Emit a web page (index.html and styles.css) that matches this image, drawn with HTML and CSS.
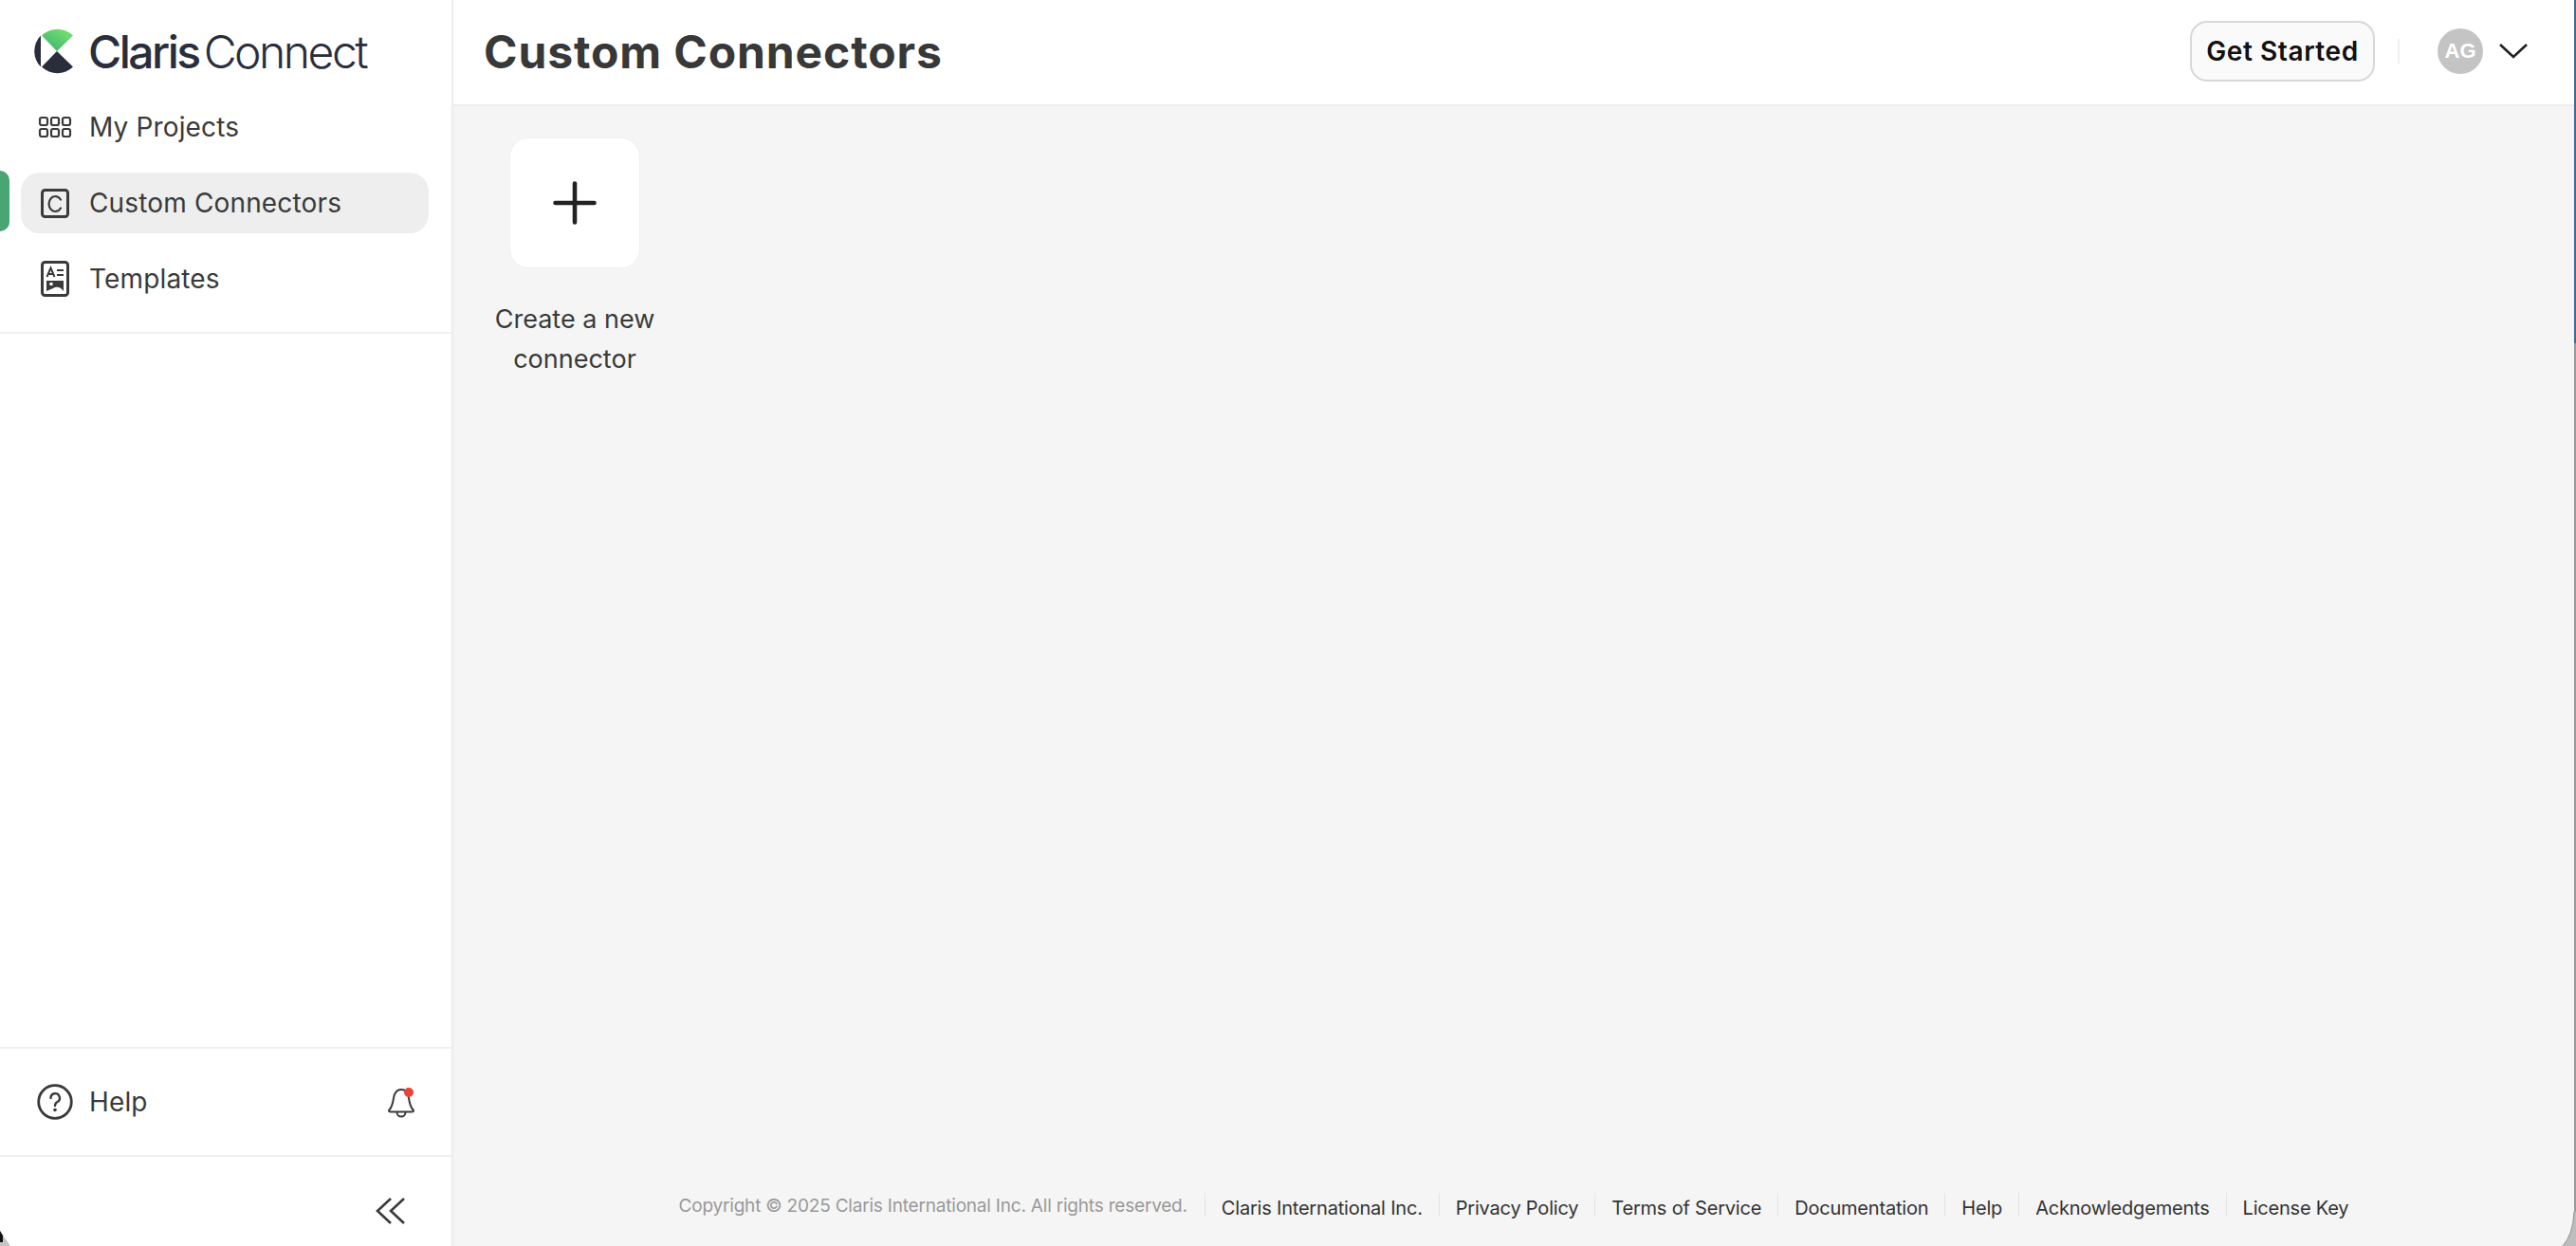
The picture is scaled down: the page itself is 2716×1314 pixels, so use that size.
FILE: index.html
```html
<!DOCTYPE html>
<html lang="en">
<head>
    <meta charset="UTF-8">
    <title>Custom Connectors</title>
    <link rel="stylesheet" href="styles.css">
</head>
<body>
<aside class="sidebar">
    <div class="brand">
        <svg class="brand-mark" width="48" height="48" viewBox="0 0 48 48">
            <defs>
                <linearGradient id="leaf" x1="0.1" y1="1" x2="0.9" y2="0">
                    <stop offset="0" stop-color="#37b36f"/>
                    <stop offset="1" stop-color="#7be26f"/>
                </linearGradient>
            </defs>
            <path d="M24 24 L8 7.500 A23.500 23.500 0 0 1 41 7.500 Z" fill="url(#leaf)"/>
            <path d="M24 24 L8 40.500 A23.500 23.500 0 0 0 41 40.500 Z" fill="#2a2e3c"/>
            <path d="M7 7.500 A23.500 23.500 0 0 0 7 40.500 Z" fill="#2a2e3c"/>
        </svg>
        <span class="brand-name"><b>Claris</b> Connect</span>
    </div>
    <nav class="nav">
        <a class="nav-item">
            <svg class="icon" width="36" height="36" viewBox="0 0 36 36" fill="none" stroke="#3a3a3a" stroke-width="2.2">
                <rect x="2" y="8" width="8" height="8" rx="2"/><rect x="14" y="8" width="8" height="8" rx="2"/><rect x="26" y="8" width="8" height="8" rx="2"/>
                <rect x="2" y="20" width="8" height="8" rx="2"/><rect x="14" y="20" width="8" height="8" rx="2"/><rect x="26" y="20" width="8" height="8" rx="2"/>
            </svg>
            My Projects
        </a>
        <a class="nav-item active">
            <svg class="icon" width="36" height="36" viewBox="0 0 36 36" fill="none" stroke="#3a3a3a" stroke-width="3">
                <rect x="4.500" y="4.500" width="27" height="28" rx="3"/>
                <path d="M24 14.500 A6.800 8 0 1 0 24 23.500" stroke-width="2.200" stroke-linecap="round"/>
            </svg>
            Custom Connectors
        </a>
        <a class="nav-item">
            <svg class="icon" width="36" height="40" viewBox="0 0 36 40" fill="none" stroke="#3a3a3a" stroke-width="3">
                <rect x="4.500" y="2.500" width="27" height="35" rx="3"/>
                <path d="M9.500 18 L13.500 8.500 L17.500 18 M11 15 H16 M20 11 H27 M20 16 H27" stroke-width="2"/>
                <path d="M9 22 H27 V33 C24 29 20 27.500 16 30 C14 31 11 32 9 33 Z" fill="#3a3a3a" stroke="none"/>
                <circle cx="14" cy="25.500" r="1.800" fill="#fff" stroke="none"/>
            </svg>
            Templates
        </a>
    </nav>
    <div class="side-spacer"></div>
    <div class="side-help">
        <a class="help-link">
            <svg class="icon" width="38" height="38" viewBox="0 0 38 38" fill="none" stroke="#3a3a3a" stroke-width="2.800">
                <circle cx="19" cy="19" r="17.300"/>
                <path d="M14.500 15 A4.700 4.700 0 1 1 21.500 19 C19.800 20 19 21 19 23" stroke-linecap="round" stroke-width="2.400"/>
                <circle cx="19" cy="27.500" r="1.800" fill="#3a3a3a" stroke="none"/>
            </svg>
            Help
        </a>
        <svg class="bell" width="30" height="34" viewBox="0 0 30 34" fill="none" stroke="#3a3a3a" stroke-width="2">
            <path d="M2 26 C6 22 6 18 7 13 C8 7 11 4 15 4 C19 4 22 7 23 13 C24 18 24 22 28 26 C28 27 27 27.500 26 27.500 H4 C3 27.500 2 27 2 26 Z" stroke-linejoin="round"/>
            <path d="M10.500 28 A4.500 4.500 0 0 0 19.500 28"/>
            <circle cx="23" cy="7" r="5" fill="#ea4335" stroke="none"/>
        </svg>
    </div>
    <div class="side-collapse">
        <svg width="32" height="30" viewBox="0 0 32 30" fill="none" stroke="#3a3a3a" stroke-width="2.600">
            <path d="M16 2 L2 15 L16 28"/>
            <path d="M30 2 L16 15 L30 28"/>
        </svg>
    </div>
</aside>

<main class="main">
    <header class="topbar">
        <h1>Custom Connectors</h1>
        <div class="topbar-actions">
            <button class="btn-start">Get Started</button>
            <span class="topbar-sep"></span>
            <span class="avatar">AG</span>
            <svg width="32" height="18" viewBox="0 0 32 18" fill="none" stroke="#222" stroke-width="2.600">
                <path d="M2 2 L16 15 L30 2"/>
            </svg>
        </div>
    </header>
    <section class="content">
        <a class="new-connector">
            <span class="new-card">
                <svg width="46" height="46" viewBox="0 0 46 46" stroke="#222" stroke-width="4.600" stroke-linecap="round">
                    <path d="M23 2.500 V43.500 M2.500 23 H43.500"/>
                </svg>
            </span>
            <span class="new-label">Create a new connector</span>
        </a>
    </section>
    <footer class="footer">
        <span class="copyright">Copyright © 2025 Claris International Inc. All rights reserved.</span>
        <a>Claris International Inc.</a>
        <a>Privacy Policy</a>
        <a>Terms of Service</a>
        <a>Documentation</a>
        <a>Help</a>
        <a>Acknowledgements</a>
        <a>License Key</a>
    </footer>
</main>
<div class="edge"></div>

<svg class="corner corner-left" width="12" height="16" viewBox="0 0 12 16">
    <path d="M0 0 L11 16 H0 Z" fill="#c4c4c4"/>
    <path d="M0 0 L3 5 V12 H0 Z" fill="#111"/>
</svg>
<svg class="corner corner-right" width="16" height="36" viewBox="0 0 16 36">
    <path d="M14 0 Q13 24 2 36 H16 V0 Z" fill="#bdbdbd"/>
    <path d="M14 0 Q13 24 2 36" fill="none" stroke="#8f8f8f" stroke-width="1"/>
</svg>
</body>
</html>
```

FILE: styles.css
```css
* {
    margin: 0;
    padding: 0;
    box-sizing: border-box;
}
html, body {
    height: 100%;
}
body {
    display: flex;
    position: relative;
    overflow: hidden;
    font-family: Inter, "Liberation Sans", sans-serif;
    color: #3a3a3a;
    background: #fff;
}

/* sidebar */
.sidebar {
    width: 478px;
    flex: none;
    display: flex;
    flex-direction: column;
    border-right: 2px solid #ececec;
}
.brand {
    height: 102px;
    display: flex;
    align-items: center;
    padding: 6px 0 0 36px;
    gap: 9px;
}
.brand-mark {
    flex: none;
}
.brand-name {
    font-size: 48px;
    font-weight: 300;
    letter-spacing: -2.5px;
    color: #2a2e3c;
    word-spacing: -6px;
}
.brand-name b {
    font-weight: 500;
}
.nav {
    display: flex;
    flex-direction: column;
    gap: 16px;
    padding-bottom: 24px;
    border-bottom: 2px solid #f0f0f0;
}
.nav-item {
    position: relative;
    height: 64px;
    margin-left: 22px;
    width: 430px;
    padding-left: 18px;
    display: flex;
    align-items: center;
    gap: 18px;
    font-size: 28px;
    letter-spacing: 0.15px;
    border-radius: 20px;
}
.nav-item.active {
    background: #eeeeee;
}
.nav-item.active::before {
    content: "";
    position: absolute;
    left: -22px;
    top: -2px;
    width: 10px;
    height: 64px;
    background: #4aa574;
    border-radius: 0 10px 10px 0;
}
.icon {
    flex: none;
}
.side-spacer {
    flex: 1;
}
.side-help {
    height: 116px;
    display: flex;
    align-items: center;
    justify-content: space-between;
    padding: 0 38px 0 39px;
    border-top: 2px solid #f0f0f0;
    border-bottom: 2px solid #f0f0f0;
}
.help-link {
    display: flex;
    align-items: center;
    gap: 17px;
    font-size: 28px;
    letter-spacing: 0.15px;
}
.side-collapse {
    height: 94px;
    display: flex;
    justify-content: flex-end;
    align-items: center;
    padding: 20px 48px 0 0;
}

/* main */
.main {
    flex: 1;
    min-width: 0;
    display: flex;
    flex-direction: column;
    background: #f5f5f5;
}
.topbar {
    height: 112px;
    flex: none;
    display: flex;
    align-items: center;
    justify-content: space-between;
    padding: 0 48px 2px 32px;
    background: #fff;
    border-bottom: 2px solid #ececec;
}
h1 {
    font-size: 48px;
    font-weight: 700;
    letter-spacing: 0.9px;
    color: #383838;
}
.topbar-actions {
    display: flex;
    align-items: center;
}
.btn-start {
    width: 195px;
    height: 64px;
    font: 600 28px Inter, "Liberation Sans", sans-serif;
    letter-spacing: 0.6px;
    color: #111;
    background: #fafafa;
    border: 2px solid #d8d8d8;
    border-radius: 18px;
}
.topbar-sep {
    width: 2px;
    height: 26px;
    margin: 0 40px 0 24px;
    background: #efefef;
}
.avatar {
    width: 48px;
    height: 48px;
    margin-right: 16px;
    border-radius: 50%;
    background: #c4c4c4;
    color: #fff;
    font: 700 22px/48px "Liberation Sans", sans-serif;
    text-align: center;
}
.content {
    flex: 1;
    padding: 33px 0 0 30px;
}
.new-connector {
    width: 196px;
    display: flex;
    flex-direction: column;
    align-items: center;
}
.new-card {
    width: 138px;
    height: 138px;
    display: flex;
    align-items: center;
    justify-content: center;
    background: #fff;
    border: 1px solid #efefef;
    border-radius: 20px;
}
.new-label {
    margin-top: 33px;
    font-size: 27px;
    line-height: 42px;
    text-align: center;
}
.footer {
    display: flex;
    justify-content: center;
    align-items: flex-start;
    padding: 0 0 31px 17px;
    font-size: 20px;
    letter-spacing: -0.2px;
}
.footer a {
    height: 25px;
    line-height: 33px;
    padding: 0 17px;
    border-left: 1px solid #e4e4e4;
    color: #333;
}
.copyright {
    height: 25px;
    line-height: 27px;
    padding-right: 18px;
    font-size: 19px;
    letter-spacing: -0.2px;
    color: #999;
}

/* the strip of desktop behind the window */
.edge {
    width: 2px;
    flex: none;
    background: linear-gradient(#3f6a94 362px, #9a9a9a 362px);
}
.corner {
    position: absolute;
    bottom: 0;
}
.corner-left {
    left: 0;
}
.corner-right {
    right: 0;
}
```
